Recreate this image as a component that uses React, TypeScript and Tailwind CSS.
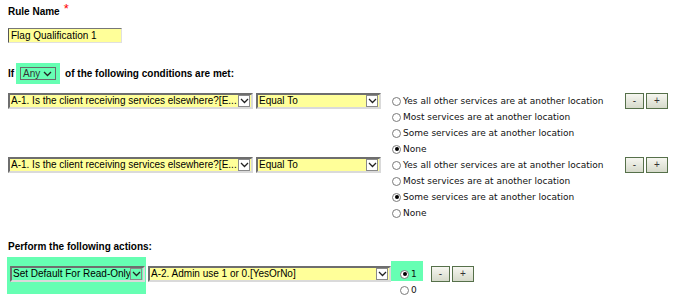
import React from "react"

const green = "bg-[#66ffb3]"

function Chevron() {
  return (
    <svg width="9" height="6" viewBox="0 0 9 6" className="block">
      <polyline points="1,1 4.5,4.5 8,1" fill="none" stroke="#222" strokeWidth="1.3" />
    </svg>
  )
}

function Select({ text, w, yellow = true }: { text: string; w: string; yellow?: boolean }) {
  return (
    <div
      className={`${w} h-[16px] flex items-center border-2 border-t-[#6e6e6e] border-l-[#6e6e6e] border-b-[#dadada] border-r-[#dadada] ${
        yellow ? "bg-[#ffff99]" : "bg-transparent border-b-[#7a8f82] border-r-[#7a8f82]"
      }`}
    >
      <span className="flex-1 overflow-hidden whitespace-nowrap pl-[1px] text-[10px] leading-[12px] text-black">{text}</span>
      <span className={`w-[12px] h-[12px] mr-[1px] flex items-center justify-center border border-[#8a8a8a] ${yellow ? "bg-white" : "bg-transparent"}`}>
        <Chevron />
      </span>
    </div>
  )
}

function Radio({ label, checked = false }: { label: string; checked?: boolean }) {
  return (
    <div className="h-[16px] flex items-center gap-[2px]">
      <span className="w-[9px] h-[9px] rounded-full border border-[#7b7b7b] bg-white flex items-center justify-center">
        {checked && <span className="w-[4px] h-[4px] rounded-full bg-black" />}
      </span>
      <span className="font-['DejaVu_Sans',sans-serif] text-[9px] leading-[12px] text-[#111]">{label}</span>
    </div>
  )
}

function PlusMinus() {
  return (
    <div className="flex gap-[2px]">
      <button className="w-[19px] h-[16px] border border-[#56704a] bg-gradient-to-b from-[#f6f6f0] to-[#d6dacb] text-[10px] leading-[12px] text-[#333] flex items-center justify-center">-</button>
      <button className="w-[22px] h-[16px] border border-[#56704a] bg-gradient-to-b from-[#f6f6f0] to-[#d6dacb] text-[10px] leading-[12px] text-[#333] flex items-center justify-center">+</button>
    </div>
  )
}

const options = [
  "Yes all other services are at another location",
  "Most services are at another location",
  "Some services are at another location",
  "None",
]

function Condition({ checked }: { checked: number }) {
  return (
    <div className="flex items-start h-[64px]">
      <Select text="A-1. Is the client receiving services elsewhere?[E..." w="w-[245px]" />
      <div className="w-[3px]" />
      <Select text="Equal To" w="w-[125px]" />
      <div className="ml-[11px] w-[233px]">
        {options.map((o, i) => (
          <Radio key={o} label={o} checked={i === checked} />
        ))}
      </div>
      <PlusMinus />
    </div>
  )
}

export default function App() {
  return (
    <div className="w-[682px] h-[307px] bg-white pl-[8px] pt-[6px] font-['Liberation_Sans',Arial,sans-serif] text-black overflow-hidden">
      <div className="flex h-[12px] leading-[12px]">
        <span className="font-bold text-[10px]">Rule Name</span>
        <span className="ml-[4px] -mt-[3px] text-[13px] leading-[12px] text-[#ff0000]">*</span>
      </div>

      <div className="mt-[10px] w-[114px] h-[15px] flex items-center bg-[#ffff99] border border-t-[#777] border-l-[#555] border-b-[#e0e0e0] border-r-[#e0e0e0]">
        <span className="pl-[2px] text-[10px] leading-[12px]">Flag Qualification 1</span>
      </div>

      <div className="mt-[20px] flex items-center h-[21px]">
        <span className="font-bold text-[10px] leading-[12px]">If</span>
        <div className={`ml-[2px] h-[21px] w-[44px] ${green} flex items-center pl-[4px]`}>
          <div className="w-[36px] h-[13px] border border-[#6a6a6a] flex items-center justify-between pl-[2px] pr-[3px]">
            <span className="text-[10px] leading-[11px] text-[#333]">Any</span>
            <Chevron />
          </div>
        </div>
        <span className="ml-[5px] font-bold text-[10px] leading-[12px]">of the following conditions are met:</span>
      </div>

      <div className="mt-[9px]">
        <Condition checked={3} />
        <Condition checked={2} />
      </div>

      <div className="mt-[20px] font-bold text-[10px] leading-[12px]">Perform the following actions:</div>

      <div className="mt-[4px] flex items-start">
        <div className={`-ml-[1px] w-[139px] h-[37px] ${green} pt-[9px] pl-[3px]`}>
          <Select text="Set Default For Read-Only" w="w-[135px]" yellow={false} />
        </div>
        <div className="ml-[2px] mt-[9px]">
          <Select text="A-2. Admin use 1 or 0.[YesOrNo]" w="w-[243px]" />
        </div>
        <div className="mt-[4px]">
          <div className={`w-[32px] h-[20px] ${green} pl-[9px] pt-[5px]`}>
            <Radio label="1" checked />
          </div>
          <div className="pl-[9px] mt-[1px]">
            <Radio label="0" />
          </div>
        </div>
        <div className="ml-[8px] mt-[9px]">
          <PlusMinus />
        </div>
      </div>
    </div>
  )
}
